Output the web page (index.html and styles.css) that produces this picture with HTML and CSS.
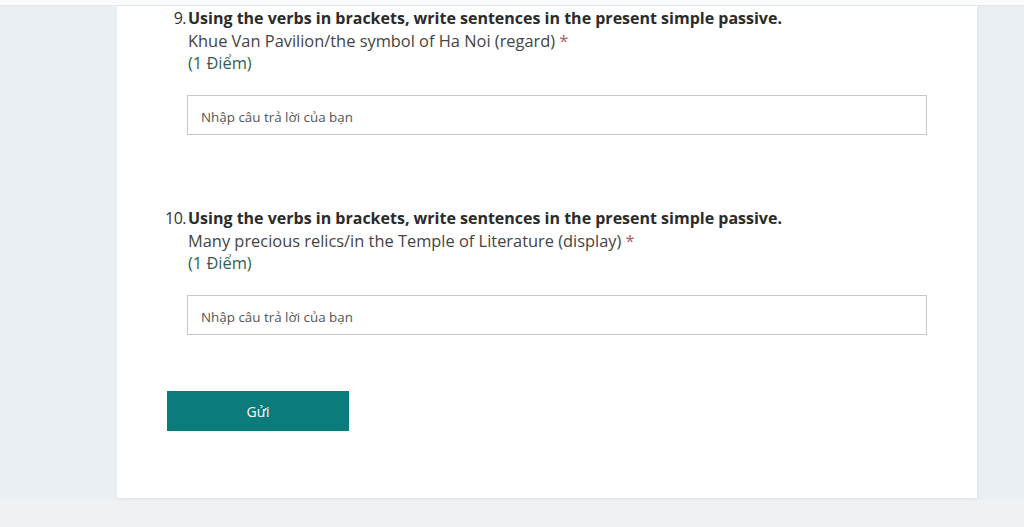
FILE: index.html
```html
<!DOCTYPE html>
<html lang="vi">
<head>
    <meta charset="UTF-8" />
    <meta name="viewport" content="width=device-width, initial-scale=1.0" />
    <title>Biểu mẫu</title>
    <link rel="stylesheet" href="styles.css">
</head>
<body>
    <div class="topbar"></div>
    <div class="page">
        <main class="card">
            <div class="question">
                <span class="num">9.</span>
                <div class="body">
                    <h2>Using the verbs in brackets, write sentences in the present simple passive.</h2>
                    <p class="sub">Khue Van Pavilion/the symbol of Ha Noi (regard) <span class="req">*</span></p>
                    <p class="points">(1 Điểm)</p>
                    <div class="answer">Nhập câu trả lời của bạn</div>
                </div>
            </div>

            <div class="question">
                <span class="num">10.</span>
                <div class="body">
                    <h2>Using the verbs in brackets, write sentences in the present simple passive.</h2>
                    <p class="sub">Many precious relics/in the Temple of Literature (display) <span class="req">*</span></p>
                    <p class="points">(1 Điểm)</p>
                    <div class="answer">Nhập câu trả lời của bạn</div>
                </div>
            </div>

            <button type="button" class="send">Gửi</button>
        </main>
    </div>
</body>
</html>
```

FILE: styles.css
```css
body,
h2,
p {
  margin: 0;
  padding: 0;
}

* {
  box-sizing: border-box;
}

body {
  font-family: 'Open Sans', 'Noto Sans', sans-serif;
  color: #333;
  background-color: #eef2f5;
  height: 527px;
  overflow: hidden;
}

.topbar {
  height: 6px;
  background-color: #fafbfc;
  border-bottom: 1px solid #e6e8ea;
}

.page {
  background-color: #e9eff2;
  padding-left: 117px;
  height: 493px;
}

.card {
  width: 860px;
  height: 492px;
  background-color: #fff;
  padding: 0 0 0 43px;
  box-shadow: 1px 1px 3px rgba(0, 0, 0, 0.06);
}

.question {
  display: grid;
  grid-template-columns: 26px 1fr;
  column-gap: 2px;
  margin-bottom: 71px;
}

.question:nth-of-type(2) {
  margin-bottom: 56px;
}

.num {
  font-size: 16px;
  line-height: 24px;
  text-align: right;
  letter-spacing: -0.5px;
}

.body h2 {
  font-size: 16px;
  font-weight: 700;
  line-height: 24px;
  color: #2b2b2b;
}

.sub {
  font-size: 16.4px;
  line-height: 22px;
  color: #444;
}

.req {
  color: #b4585c;
}

.points {
  font-size: 16.4px;
  line-height: 22px;
  color: #2f5e58;
}

.answer {
  margin: 21px 0 0 -1px;
  width: 740px;
  height: 40px;
  border: 1px solid #c8c8c8;
  padding: 2px 13px 0;
  font-size: 13.4px;
  line-height: 38px;
  color: #555;
}

.send {
  display: block;
  margin-left: 7px;
  width: 182px;
  height: 40px;
  border: none;
  background-color: #0b7b7b;
  color: #fff;
  font-family: 'Open Sans', 'Noto Sans', sans-serif;
  font-size: 14px;
  cursor: pointer;
}
```
